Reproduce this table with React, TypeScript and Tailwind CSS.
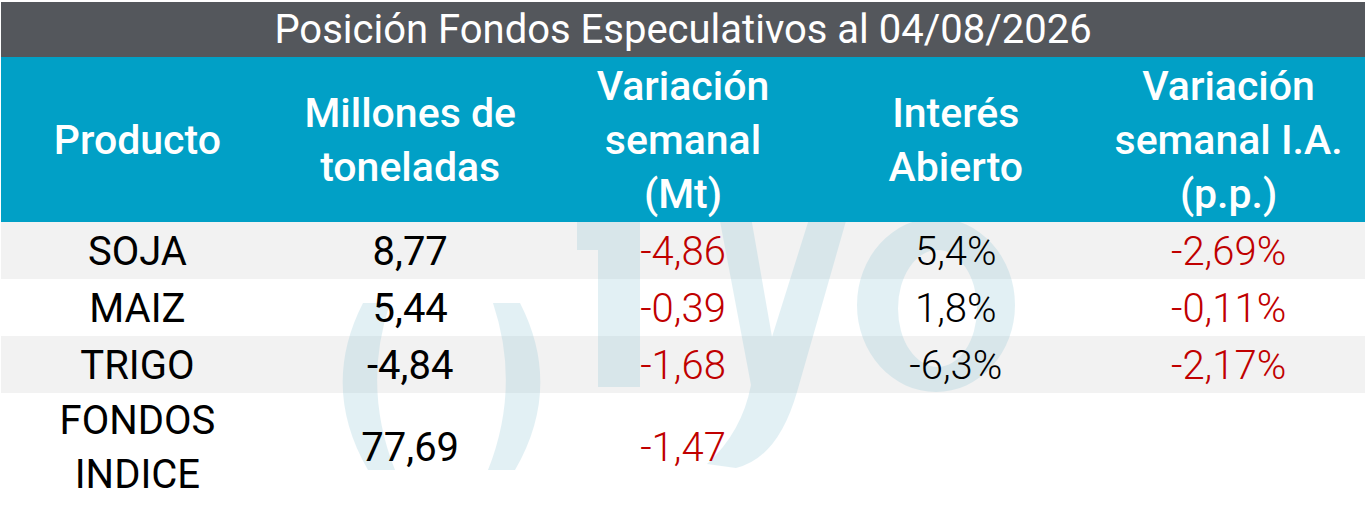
import React from "react";

type Row = {
  name: string[];
  mt: string;
  varMt: string;
  oi: string;
  varOi: string;
  shaded: boolean;
  tall?: boolean;
};

const rows: Row[] = [
  { name: ["SOJA"], mt: "8,77", varMt: "-4,86", oi: "5,4%", varOi: "-2,69%", shaded: true },
  { name: ["MAIZ"], mt: "5,44", varMt: "-0,39", oi: "1,8%", varOi: "-0,11%", shaded: false },
  { name: ["TRIGO"], mt: "-4,84", varMt: "-1,68", oi: "-6,3%", varOi: "-2,17%", shaded: true },
  { name: ["FONDOS", "INDICE"], mt: "77,69", varMt: "-1,47", oi: "", varOi: "", shaded: false, tall: true },
];

const headers = [
  ["Producto"],
  ["Millones de", "toneladas"],
  ["Variación", "semanal", "(Mt)"],
  ["Interés", "Abierto"],
  ["Variación", "semanal I.A.", "(p.p.)"],
];

// faint logo behind the body rows, coordinates are page pixels
function Watermark() {
  return (
    <svg
      className="pointer-events-none absolute left-0 top-0"
      width={1364}
      height={281}
      viewBox="1 222 1364 281"
    >
      <g fill="#85c2d4" opacity={0.23}>
        {/* ( */}
        <path d="M363 303 Q320 387 368 470 L395 470 Q362 387 390 303 Z" />
        {/* ) */}
        <path d="M520 303 Q563 387 515 470 L488 470 Q521 387 493 303 Z" />
        {/* 1 */}
        <path d="M577 200 L640 200 L640 387 L598 387 L598 250 L577 250 Z" />
        {/* y */}
        <path d="M716 200 L748 200 L772 337 L815 200 L852 200 L797 392 Q778 458 736 468 L707 464 Q742 432 751 385 Z" />
        {/* o */}
        <path
          fillRule="evenodd"
          d="M857 305 A79 87 0 1 0 1015 305 A79 87 0 1 0 857 305 Z M898 308.5 A39.5 58.5 0 1 1 977 308.5 A39.5 58.5 0 1 1 898 308.5 Z"
        />
      </g>
    </svg>
  );
}

export default function App() {
  return (
    <div className="min-h-[506px] bg-white pl-[1px] pt-[2px] font-['Roboto','Liberation_Sans',sans-serif]">
      <div className="w-[1364px]">
        <div className="flex h-[55px] items-center justify-center bg-[#54575c] text-[40px] font-normal leading-none text-white">
          Posición Fondos Especulativos al 04/08/2026
        </div>

        <div className="grid h-[165px] grid-cols-5 bg-[#01a0c6] text-[41px] font-medium leading-[54px] text-white">
          {headers.map((lines, i) => (
            <div key={i} className="flex flex-col items-center justify-center text-center">
              {lines.map((l) => (
                <span key={l}>{l}</span>
              ))}
            </div>
          ))}
        </div>

        <div className="relative">
          {rows.map((r) => (
            <div
              key={r.name.join(" ")}
              className={`grid grid-cols-5 text-[40px] ${r.tall ? "h-[110px]" : "h-[57px]"} ${
                r.shaded ? "bg-[#f2f2f2]" : "bg-white"
              }`}
            >
              <div className="flex flex-col items-center justify-center leading-[54px] text-black">
                {r.name.map((n) => (
                  <span key={n} className="relative z-10">
                    {n}
                  </span>
                ))}
              </div>
              <div className="flex items-center justify-center text-black">
                <span className="relative z-10">{r.mt}</span>
              </div>
              <div className="flex items-center justify-center font-light text-[#c00000]">
                <span className="relative z-10">{r.varMt}</span>
              </div>
              <div className="flex items-center justify-center font-light text-black">
                <span className="relative z-10">{r.oi}</span>
              </div>
              <div className="flex items-center justify-center font-light text-[#c00000]">
                <span className="relative z-10">{r.varOi}</span>
              </div>
            </div>
          ))}
          <Watermark />
        </div>
      </div>
    </div>
  );
}
